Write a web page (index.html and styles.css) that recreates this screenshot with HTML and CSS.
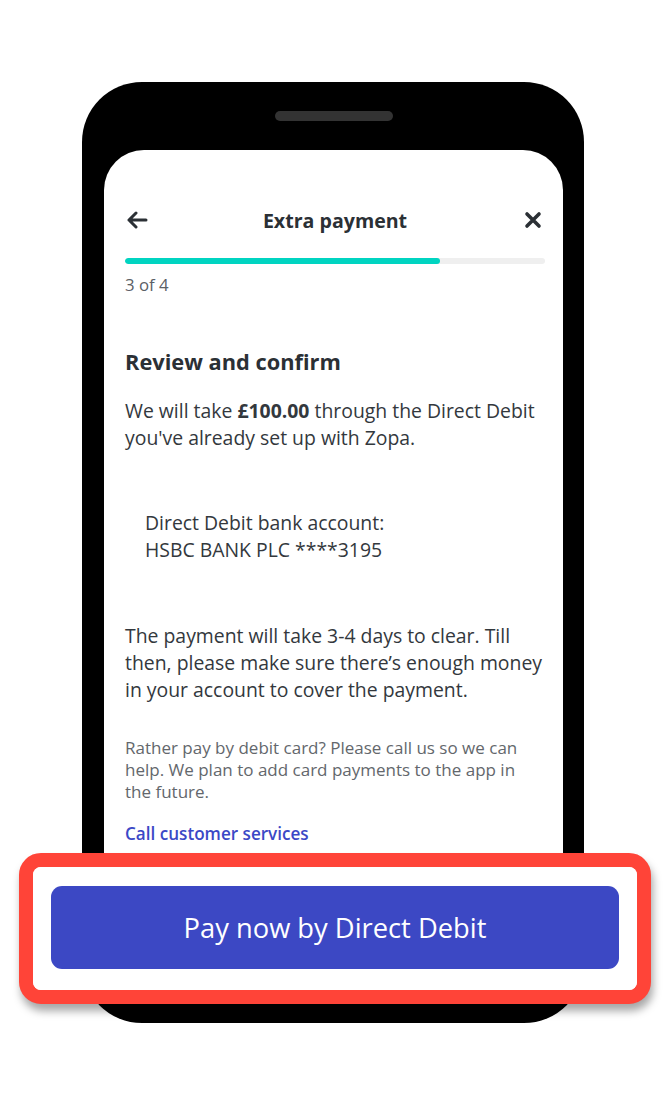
FILE: index.html
```html
<!DOCTYPE html>
<html lang="en">
<head>
  <meta charset="UTF-8">
  <meta name="viewport" content="width=device-width, initial-scale=1.0">
  <title>Extra payment</title>
  <link rel="stylesheet" href="styles.css">
</head>
<body>
  <div class="page">
    <div class="phone">
      <div class="speaker"></div>
      <div class="screen">
        <div class="topbar">
          <span class="icon-btn">
            <svg width="22" height="18" viewBox="0 0 22 18"><path d="M20 9H3M10 2L3 9l7 7" fill="none" stroke="#2b3035" stroke-width="3" stroke-linecap="round" stroke-linejoin="round"/></svg>
          </span>
          <h1>Extra payment</h1>
          <span class="icon-btn">
            <svg width="18" height="18" viewBox="0 0 18 18"><path d="M3 3l12 12M15 3L3 15" fill="none" stroke="#2b3035" stroke-width="3.6" stroke-linecap="round"/></svg>
          </span>
        </div>
        <div class="progress"><div class="progress-fill" style="width:75%"></div></div>
        <div class="step">3 of 4</div>

        <h2>Review and confirm</h2>
        <p class="text">We will take <b>£100.00</b> through the Direct Debit you've already set up with Zopa.</p>
        <p class="text bank">Direct Debit bank account:<br>HSBC BANK PLC ****3195</p>
        <p class="text clear">The payment will take 3-4 days to clear. Till then, please make sure there’s enough money in your account to cover the payment.</p>
        <p class="small">Rather pay by debit card? Please call us so we can help. We plan to add card payments to the app in the future.</p>
        <a class="link" href="#">Call customer services</a>
      </div>
    </div>

    <div class="highlight">
      <div class="highlight-inner">
        <button class="pay-btn">Pay now by Direct Debit</button>
      </div>
    </div>
  </div>
</body>
</html>
```

FILE: styles.css
```css
* { margin: 0; padding: 0; box-sizing: border-box; }
body { font-family: "Open Sans", "Noto Sans", sans-serif; background: #fff; color: #2b3035; }
.page { position: relative; width: 668px; height: 1104px; padding: 82px 0 0 82px; }

.phone { width: 502px; height: 941px; background: #000; border-radius: 60px; padding: 29px 21px 22px 22px; display: flex; flex-direction: column; align-items: center; }
.speaker { width: 118px; height: 10px; border-radius: 5px; background: #333; margin-bottom: 29px; }
.screen { width: 459px; flex-grow: 1; background: #fff; border-radius: 40px; padding: 50px 18px 0 21px; overflow: hidden; }

.topbar { height: 40px; display: flex; align-items: center; justify-content: space-between; }
.topbar h1 { font-size: 19.6px; font-weight: 700; color: #2b3035; }
.icon-btn { width: 24px; display: flex; justify-content: center; }
.icon-btn svg { display: block; }

.progress { height: 6px; border-radius: 3px; background: #efefef; margin-top: 18px; overflow: hidden; }
.progress-fill { height: 100%; background: #00d4c1; border-radius: 3px; }
.step { font-size: 16.8px; line-height: 22px; color: #5b6066; margin-top: 10px; }

h2 { font-size: 21.8px; line-height: 28px; font-weight: 700; color: #2b3035; margin-top: 52px; }
.text { font-size: 19.4px; line-height: 27px; color: #33383d; margin-top: 21px; }
.text b { font-weight: 700; }
.bank { padding-left: 20px; margin-top: 58px; }
.clear { margin-top: 59px; }
.small { font-size: 17px; line-height: 22px; color: #63676c; margin-top: 34px; }
.link { display: block; font-size: 17.1px; line-height: 22px; font-weight: 600; color: #3b48c6; text-decoration: none; margin-top: 20px; }

.highlight { position: absolute; left: 19px; top: 853px; width: 632px; height: 151px; border: 14px solid #ff4438; border-radius: 22px; background: #fff; box-shadow: 2px 7px 9px rgba(0, 0, 0, 0.35); }
.highlight-inner { height: 100%; border-radius: 8px; background: #fff; padding: 19px 18px 0 18px; }
.pay-btn { width: 568px; height: 83px; border: none; border-radius: 11px; background: #3c48c4; color: #fff; font-family: "Open Sans", "Noto Sans", sans-serif; font-size: 27.3px; cursor: pointer; }
```
